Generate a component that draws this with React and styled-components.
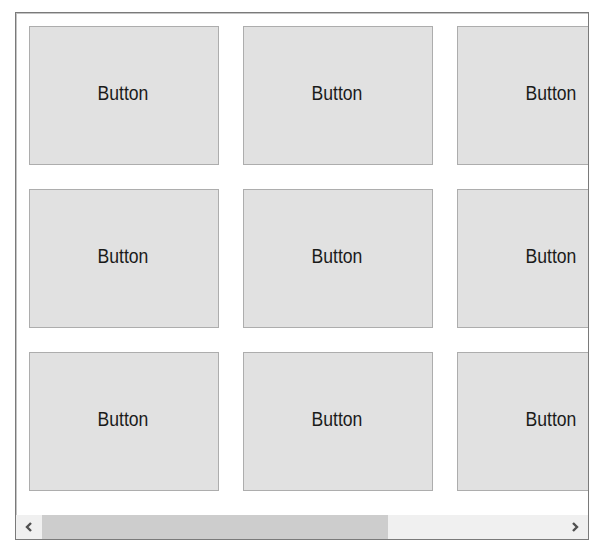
import React from "react";
import styled, { createGlobalStyle } from "styled-components";

const GlobalStyle = createGlobalStyle`
  body {
    margin: 0;
    background: #fff;
  }
`;

const Page = styled.div`
  padding: 12px 0 0 15px;
`;

const Frame = styled.div`
  width: 572px;
  border: 1px solid #7a7a7a;
  box-shadow: inset 1px 1px 0 #c4c4c4;
  background: #fff;
  display: flex;
  flex-direction: column;
  overflow: hidden;
`;

const Viewport = styled.div`
  overflow: hidden;
  padding: 13px 0 24px 13px;
`;

const Grid = styled.div`
  display: grid;
  grid-template-columns: repeat(3, 190px);
  grid-auto-rows: 139px;
  gap: 24px;
  width: max-content;
`;

const Tile = styled.button`
  box-sizing: border-box;
  margin: 0;
  padding: 0 2px 4px 0;
  border: 1px solid #adadad;
  background: #e1e1e1;
  color: #1a1a1a;
  font-family: "Liberation Sans", Arial, sans-serif;
  font-size: 20px;
  text-align: center;
`;

// the reference uses a narrow face; squeeze Liberation Sans to match
const Label = styled.span`
  display: inline-block;
  transform: scaleX(0.88);
`;

const ScrollBar = styled.div`
  display: flex;
  height: 24px;
  background: #f0f0f0;
`;

const Arrow = styled.div`
  width: 26px;
  display: flex;
  align-items: center;
  justify-content: center;
`;

const Track = styled.div`
  flex: 1;
  display: flex;
  align-items: stretch;
`;

const Thumb = styled.div`
  width: ${(p) => p.$width}px;
  background: #cdcdcd;
`;

const Chevron = ({ dir }) => (
  <svg width="12" height="12" viewBox="0 0 12 12">
    <path
      d={dir === "left" ? "M8 2 L4 6 L8 10" : "M4 2 L8 6 L4 10"}
      fill="none"
      stroke="#505050"
      strokeWidth="2.4"
    />
  </svg>
);

export default function App() {
  const tiles = Array.from({ length: 9 });
  return (
    <Page>
      <GlobalStyle />
      <Frame>
        <Viewport>
          <Grid>
            {tiles.map((_, i) => (
              <Tile key={i}>
                <Label>Button</Label>
              </Tile>
            ))}
          </Grid>
        </Viewport>
        <ScrollBar>
          <Arrow>
            <Chevron dir="left" />
          </Arrow>
          <Track>
            <Thumb $width={346} />
          </Track>
          <Arrow>
            <Chevron dir="right" />
          </Arrow>
        </ScrollBar>
      </Frame>
    </Page>
  );
}
